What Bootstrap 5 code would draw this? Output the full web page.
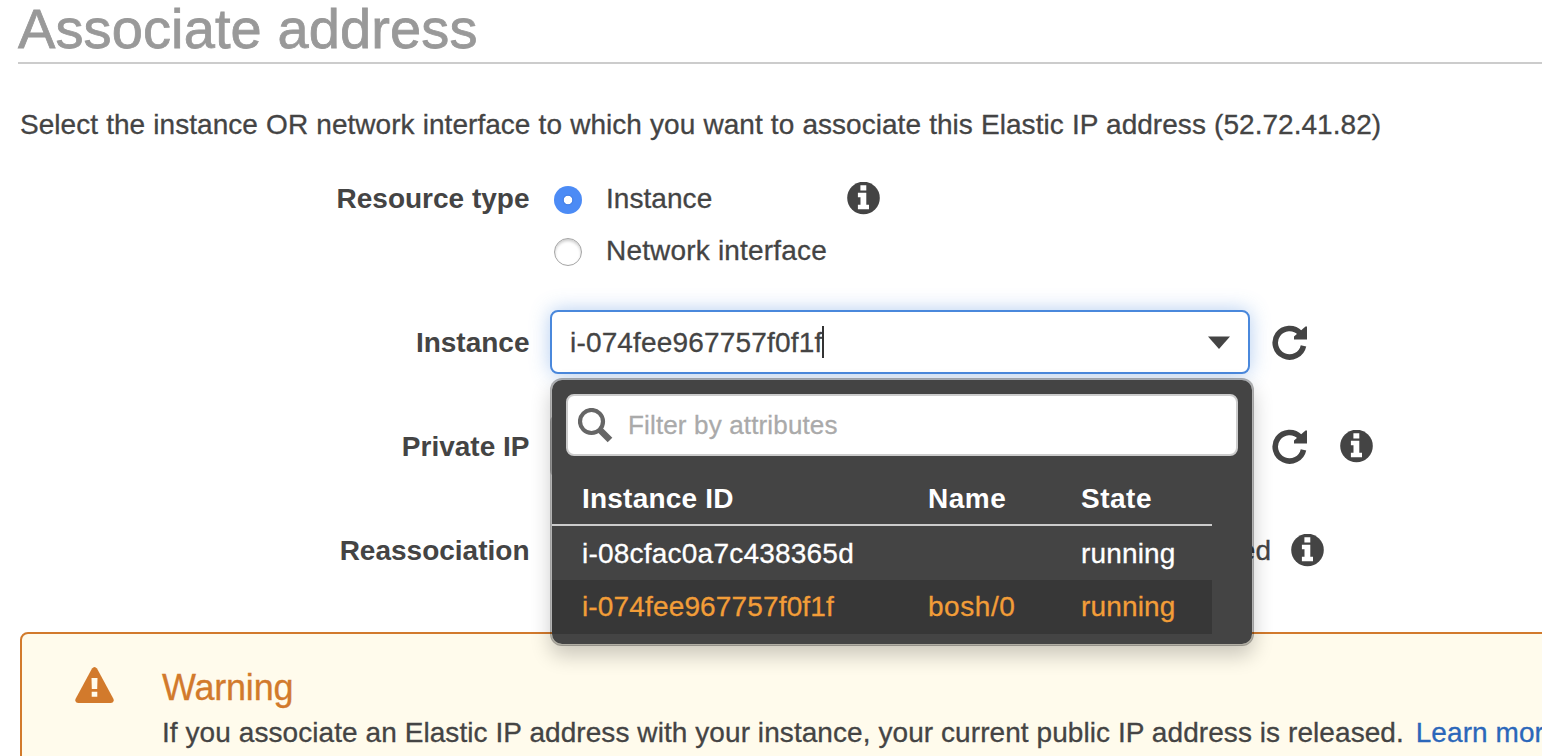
<!DOCTYPE html>
<html lang="en">
<head>
<meta charset="utf-8">
<title>Associate address</title>
<link href="https://cdn.jsdelivr.net/npm/bootstrap@5.3.0/dist/css/bootstrap.min.css" rel="stylesheet">
<style>
body{font:28px/52px "Liberation Sans",Arial,sans-serif;color:#444;background:#fff;overflow:hidden;height:756px;-webkit-text-stroke:.3px}
.title{font-size:56px;line-height:58px;height:64px;color:#999;border-bottom:2px solid #ccc;margin:0 0 0 18px;font-weight:400;letter-spacing:.12px;-webkit-text-stroke:.8px}
.intro{margin:35px 0 21px 20px;white-space:nowrap;letter-spacing:.04px;word-spacing:.3px}
.resource{margin-bottom:34px}
.lbl{width:530px;text-align:right;font-weight:700;flex:none;padding:2px .5px 0 0;-webkit-text-stroke:0}
.resource .lbl{padding-top:1px}
.ctl{margin-left:20px}
.option{height:52px}
.option span{letter-spacing:.18px;position:relative;top:1px}
.option .first{width:241px}
.option .first span{letter-spacing:.05px}
.dot{width:28px;height:28px;border-radius:50%;margin:4px 24px 0 4px;flex:none;border:1px solid #a5a5a5;box-shadow:inset 0 2px 3px rgba(0,0,0,.2)}
.dot.on{border:0;box-shadow:none;background:radial-gradient(circle at 50% 50%,#fff 3.8px,#4580e6 4.6px,#4c8bf5 6px)}
.field-row{height:64px;margin-bottom:40px}
.box{width:700px;height:64px;border:2px solid #ccc;border-radius:8px;background:#fff;padding:0 18px;flex:none}
.box.active{border-color:#4a88dc;box-shadow:0 0 20px rgba(74,136,220,.42)}
.box span{letter-spacing:.17px;padding-top:2px}
.caret{width:2px;height:32px;background:#333}
.pop{position:absolute;left:0;top:68px;width:704px;height:268px;border:2px solid rgba(0,0,0,.3);border-radius:12px;background:#444 padding-box;box-shadow:0 10px 20px rgba(0,0,0,.2);z-index:5}
.filter{margin:14px 14px 16px;height:62px;border:2px solid #ccc;border-radius:8px;background:#fff;color:#aaa;font-size:26px;padding-left:10px;letter-spacing:.15px}
.filter svg{margin-right:15px}
.grid-list{width:660px;color:#fff;table-layout:fixed;border-collapse:separate;border-spacing:0}
.grid-list th,.grid-list td{padding:0;height:54px;line-height:54px;white-space:nowrap}
.grid-list td{padding-top:1px;line-height:53px;letter-spacing:.15px}
.grid-list th{line-height:51px;padding-top:1px;border-bottom:2px solid #ccc;letter-spacing:.5px;-webkit-text-stroke:0}
.grid-list th:first-child,.grid-list td:first-child{padding-left:30px;letter-spacing:.22px}
.grid-list .picked td{background:#373737;color:#f29d38;line-height:52px;padding-top:0}
.grid-list .picked td:first-child{letter-spacing:.15px}
.grid-list .picked td:nth-child(2){letter-spacing:.55px}
.warn{margin:50px -12px 0 20px;height:160px;border:2px solid #d27a2c;border-radius:8px;background:#fffbec;padding:30px 0 0 53px}
.warn svg{margin-top:3px}
.warn h2{font-size:36px;line-height:48px;color:#d27a2c;margin:0;font-weight:400;letter-spacing:-.2px}
.warn p{line-height:42px;margin:0;white-space:nowrap;letter-spacing:.07px}
.warn a{color:#2b67ba;text-decoration:none;margin-left:4px}
.last-row{margin-bottom:0}
svg{flex:none;display:block}
.gap-a{margin-left:22px}.gap-b{margin-left:32px}.gap-c{margin-left:20px}
.tail{width:721px;padding-top:2px}
</style>
</head>
<body>
<svg width="0" height="0" class="position-absolute">
<symbol id="info" viewBox="0 0 33 33"><circle cx="16.5" cy="16" r="16.3" fill="#444"/><path fill="#fff" d="M13.400 3.300h5.900v5.100h-5.900zM10.900 10.800h8.400v12h2.700v4.400H10.900v-4.400h2.600v-7.600h-2.600z"/></symbol>
<symbol id="reload" viewBox="0 0 36 36"><path d="M31.500 21.800A14.300 14.300 0 1 1 28 9" fill="none" stroke="#444" stroke-width="5.600"/><path fill="#444" d="M35 2.500v13H22V12.500L33.500 2.500z"/></symbol>
</svg>
<h1 class="title">Associate address</h1>
<p class="intro">Select the instance OR network interface to which you want to associate this Elastic IP address (52.72.41.82)</p>
<div class="resource d-flex">
  <div class="lbl">Resource type</div>
  <div class="ctl">
    <div class="option d-flex align-items-center"><i class="dot on"></i><div class="first"><span>Instance</span></div><svg width="33" height="33"><use href="#info"/></svg></div>
    <div class="option d-flex align-items-center"><i class="dot"></i><span>Network interface</span></div>
  </div>
</div>
<div class="field-row d-flex align-items-center">
  <div class="lbl">Instance</div>
  <div class="ctl position-relative">
    <div class="box active d-flex align-items-center"><span>i-074fee967757f0f1f</span><i class="caret"></i><svg class="ms-auto" width="22" height="13"><path d="M0 .5h22L11 13z" fill="#444"/></svg></div>
    <div class="pop">
      <div class="filter d-flex align-items-center"><svg width="35" height="35"><circle cx="13.500" cy="13.500" r="11.500" fill="none" stroke="#666" stroke-width="4.200"/><path d="M21.500 21.500l4 4 6.500 6.500" stroke="#666" stroke-width="6.500"/></svg>Filter by attributes</div>
      <table class="grid-list">
        <colgroup><col style="width:376px"><col style="width:153px"><col></colgroup>
        <tr><th>Instance ID</th><th>Name</th><th>State</th></tr>
        <tr><td>i-08cfac0a7c438365d</td><td></td><td>running</td></tr>
        <tr class="picked"><td>i-074fee967757f0f1f</td><td>bosh/0</td><td>running</td></tr>
      </table>
    </div>
  </div>
  <svg width="36" height="36" class="gap-a"><use href="#reload"/></svg>
</div>
<div class="field-row d-flex align-items-center">
  <div class="lbl">Private IP</div>
  <div class="ctl box"></div>
  <svg width="36" height="36" class="gap-a"><use href="#reload"/></svg>
  <svg width="33" height="33" class="gap-b"><use href="#info"/></svg>
</div>
<div class="field-row last-row d-flex align-items-center">
  <div class="lbl">Reassociation</div>
  <div class="ctl tail text-end">ed</div>
  <svg width="33" height="33" class="gap-c"><use href="#info"/></svg>
</div>
<div class="warn d-flex">
  <svg width="39" height="36" viewBox="0 0 39 36"><path fill="#d27a2c" d="M17 1.500q2.500-3 5 0L38.500 32q1 3.500-2.500 4H3Q-.5 35.500.5 32z"/><path fill="#fffbec" d="M16.500 11h6l-.3 11h-5.400zM16.700 24.800h5.600v5h-5.600z"/></svg>
  <div style="margin-left:48px"><h2>Warning</h2><p>If you associate an Elastic IP address with your instance, your current public IP address is released. <a href="#">Learn more</a></p></div>
</div>
<script src="https://cdn.jsdelivr.net/npm/bootstrap@5.3.0/dist/js/bootstrap.bundle.min.js"></script>
</body>
</html>
